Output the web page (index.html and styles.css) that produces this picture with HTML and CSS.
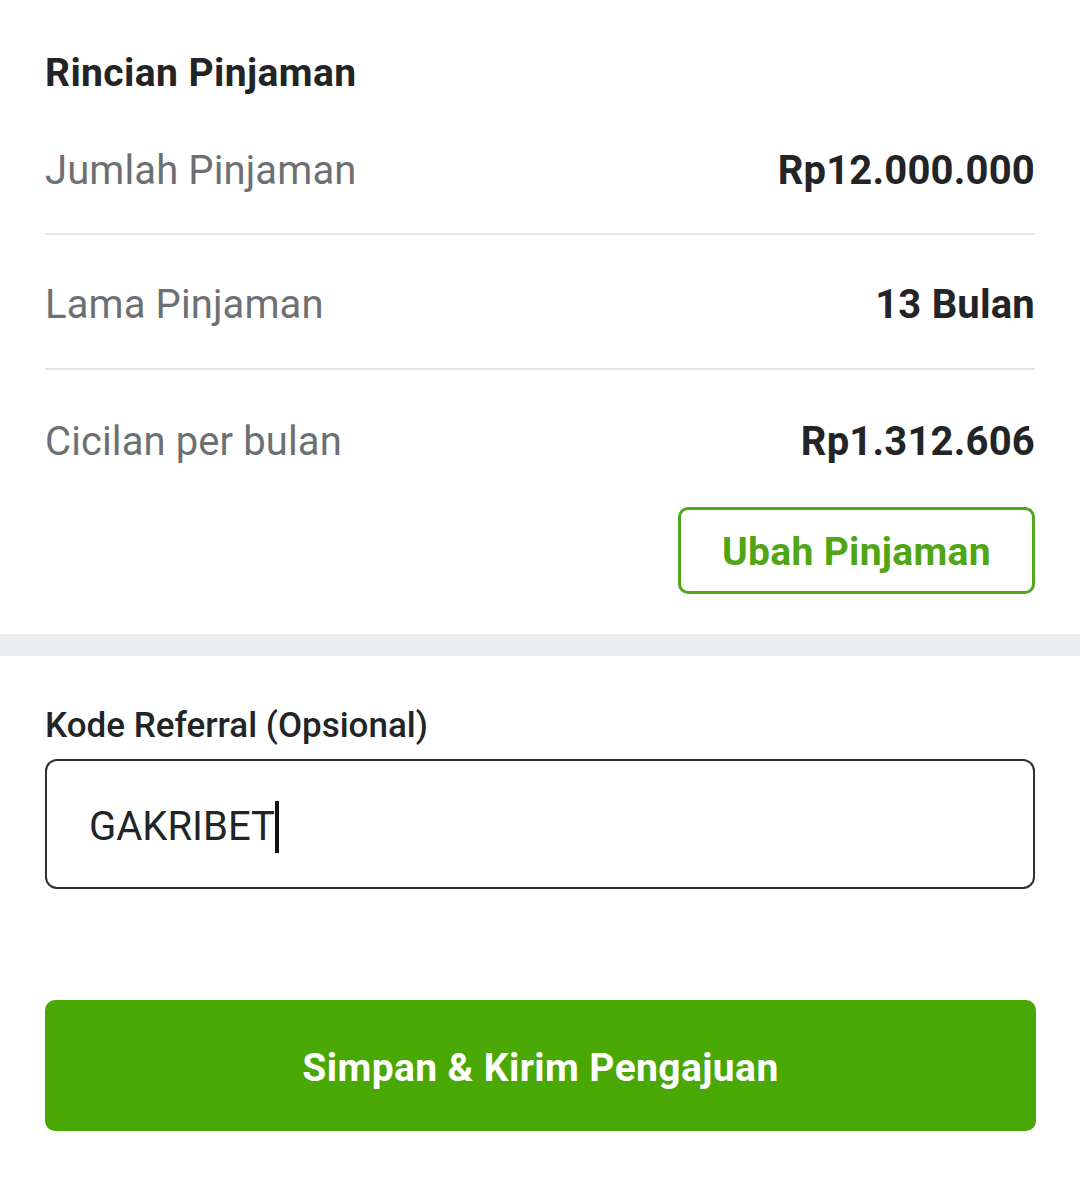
FILE: index.html
```html
<!DOCTYPE html>
<html lang="id">
<head>
<meta charset="utf-8">
<link rel="stylesheet" href="styles.css">
</head>
<body>
<section class="details">
  <h2 class="title">Rincian Pinjaman</h2>
  <div class="row first"><span class="label">Jumlah Pinjaman</span><span class="value">Rp12.000.000</span></div>
  <div class="row"><span class="label">Lama Pinjaman</span><span class="value">13 Bulan</span></div>
  <div class="row last"><span class="label">Cicilan per bulan</span><span class="value">Rp1.312.606</span></div>
  <div class="actions"><button class="btn-outline">Ubah Pinjaman</button></div>
</section>
<div class="band"></div>
<section class="referral">
  <label class="ref-label">Kode Referral (Opsional)</label>
  <div class="input"><span class="input-text">GAKRIBET</span><span class="caret"></span></div>
  <button class="btn-primary">Simpan &amp; Kirim Pengajuan</button>
</section>
</body>
</html>
```
FILE: styles.css
```css
* { box-sizing: border-box; }
html, body { margin: 0; padding: 0; background: #fff; }
body { font-family: Roboto, "Noto Sans", sans-serif; color: #222426; width: 1080px; }
.details { padding: 45px 45px 40px 45px; }
.title { margin: 0; font-size: 39px; font-weight: 700; line-height: 56px; color: #222426; letter-spacing: 0.4px; }
.row { display: flex; justify-content: space-between; align-items: center; height: 135px; padding-top: 6px; border-bottom: 2px solid #e4e5e6; }
.row.first { height: 134px; }
.row.last { border-bottom: none; height: 137px; }
.label { font-size: 40px; color: #6d7072; font-weight: 400; letter-spacing: 0.1px; }
.value { font-size: 40px; font-weight: 700; color: #222426; letter-spacing: 0.2px; }
.actions { display: flex; justify-content: flex-end; }
.btn-outline { width: 357px; height: 87px; border: 3px solid #52a81c; border-radius: 10px; background: #fff; color: #4fa514; font-family: Roboto, sans-serif; font-size: 39px; font-weight: 700; padding: 2px 0 0 0; letter-spacing: 0.3px; }
.band { height: 22px; background: #ebeced; }
.referral { padding: 44px 45px 40px 45px; }
.ref-label { display: block; font-size: 35px; font-weight: 500; line-height: 48px; color: #222426; padding-top: 2px; }
.input { margin-top: 9px; height: 130px; border: 2px solid #2e3032; border-radius: 12px; display: flex; align-items: center; padding: 5px 0 0 42px; }
.input-text { font-size: 40px; color: #222426; }
.caret { display: inline-block; width: 4px; height: 52px; background: #111; margin-left: 0; }
.btn-primary { display: block; width: 991px; height: 131px; margin-top: 111px; border: none; border-radius: 10px; background: #4aa804; color: #fff; font-family: Roboto, sans-serif; font-size: 39px; font-weight: 700; padding: 5px 0 0 0; letter-spacing: 0.4px; }
```
